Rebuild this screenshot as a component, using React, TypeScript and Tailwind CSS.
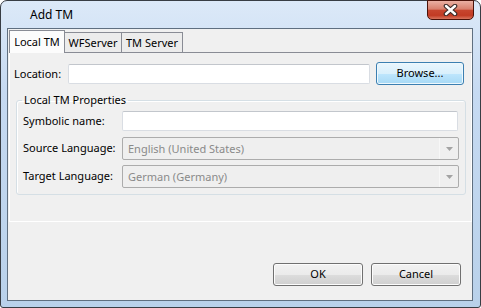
import React from "react";

const btn =
  "flex items-center justify-center h-[23px] rounded-[3px] border border-[#707070] shadow-[inset_0_0_0_1px_#fcfcfc] bg-[linear-gradient(to_bottom,#f2f2f2_0%,#ebebeb_50%,#dddddd_51%,#cfcfcf_100%)]";

const Combo = ({ value }: { value: string }) => (
  <div className="flex w-[337px] h-[23px] border border-[#acacac] rounded-[2px] bg-[#efefef]">
    <span className="flex-1 pl-[5px] leading-[21px] text-[#8a8a8a]">{value}</span>
    <span className="flex w-[19px] items-center justify-center border-l border-[#f7f7f7]">
      <svg width="7" height="4" viewBox="0 0 7 4">
        <path d="M0 0h7L3.5 4z" fill="#a3a3a3" />
      </svg>
    </span>
  </div>
);

const App = () => {
  return (
    <div className="w-[481px] h-[308px] font-['Noto_Sans',sans-serif] text-[11px] text-black whitespace-nowrap">
      <div className="flex flex-col w-full h-full rounded-t-[7px] rounded-b-[3px] border border-[#383d44] bg-[linear-gradient(to_bottom,#dce9f8_0%,#c6daf2_30%,#b9d1ea_100%)]">
        {/* title bar */}
        <div className="flex h-[27px] items-start">
          <span className="self-center ml-[29px] text-[12px] leading-[16px]">Add TM</span>
          <div className="ml-auto mr-[6px] -mt-px flex h-[20px] w-[47px] items-center justify-center rounded-b-[5px] border border-[#4a1209] bg-[linear-gradient(to_bottom,#eab0a3_0%,#d8806d_45%,#c7452e_52%,#c23b24_80%,#d9745d_100%)]">
            <svg width="15" height="12" viewBox="0 0 15 12">
              <path d="M3 2l9 8M12 2l-9 8" stroke="#3a2a28" strokeWidth="4.6" strokeLinecap="round" />
              <path d="M3 2l9 8M12 2l-9 8" stroke="#ffffff" strokeWidth="2.4" strokeLinecap="round" />
            </svg>
          </div>
        </div>

        {/* client area */}
        <div className="flex flex-col ml-[6px] mr-[7px] mb-[6px] h-[273px] border border-[#5f6f80] bg-[#f0f0f0]">
          {/* tabs */}
          <div className="flex items-end h-[22px] mt-px ml-px">
            <div className="relative z-10 -mb-px flex h-[23px] w-[56px] items-start justify-center border border-b-0 border-[#898c95] bg-[#fcfcfc] pt-[3px] leading-[16px]">
              Local TM
            </div>
            <div className="flex h-[20px] w-[57px] items-center justify-center border-t border-r border-[#898c95] bg-[#ececec] leading-[16px]">
              WFServer
            </div>
            <div className="flex h-[20px] w-[61px] items-center justify-center border-t border-r border-[#898c95] bg-[#ececec] leading-[16px]">
              TM Server
            </div>
          </div>

          {/* tab panel */}
          <div className="flex flex-col h-[170px] ml-px border-t border-t-[#898c95] border-x border-b border-x-white border-b-white">
            <div className="flex items-center h-[23px] mt-[9px] ml-[4px]">
              <span className="w-[54px] leading-[16px]">Location:</span>
              <div className="w-[302px] h-[20px] border border-[#d9dde3] border-t-[#c2c6cc] rounded-[2px] bg-white" />
              <div className="ml-[6px] flex h-[23px] w-[88px] items-center justify-center rounded-[3px] border border-[#3c7fb1] shadow-[inset_0_0_0_1px_#eef8fd] bg-[linear-gradient(to_bottom,#eaf6fd_0%,#d9f0fc_50%,#bee6fd_51%,#a7d9f5_100%)]">
                Browse...
              </div>
            </div>

            <fieldset className="ml-[6px] mr-[5px] mt-[7px] rounded-[3px] border border-[#d5dfe5] shadow-[inset_1px_1px_0_#ffffff]">
              <legend className="ml-[5px] px-[2px] leading-[16px]">Local TM Properties</legend>
              <div className="flex items-center h-[20px] mt-[3px] ml-[6px]">
                <span className="w-[99px]">Symbolic name:</span>
                <div className="w-[336px] h-[20px] border border-[#d9dde3] border-t-[#c2c6cc] rounded-[2px] bg-white" />
              </div>
              <div className="flex items-center mt-[6px] ml-[6px]">
                <span className="w-[99px]">Source Language:</span>
                <Combo value="English (United States)" />
              </div>
              <div className="flex items-center mt-[5px] mb-[6px] ml-[6px]">
                <span className="w-[99px]">Target Language:</span>
                <Combo value="German (Germany)" />
              </div>
            </fieldset>
          </div>

          {/* footer buttons */}
          <div className="flex flex-1 items-end justify-end gap-[8px] pb-[14px] pr-[11px]">
            <div className={`${btn} w-[90px]`}>OK</div>
            <div className={`${btn} w-[90px]`}>Cancel</div>
          </div>
        </div>
      </div>
    </div>
  );
};

export default App;
